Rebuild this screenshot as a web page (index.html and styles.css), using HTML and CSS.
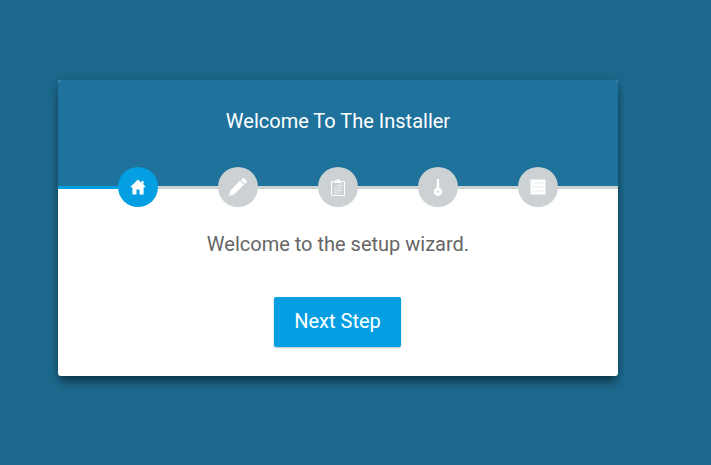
FILE: index.html
```html
<!DOCTYPE html>
<html lang="en">
<head>
<meta charset="UTF-8">
<meta name="viewport" content="width=device-width, initial-scale=1.0">
<title>Installer</title>
<link rel="stylesheet" href="styles.css">
</head>
<body>
<div class="wizard">
  <div class="wizard-header">
    <h2>Welcome To The Installer</h2>
  </div>
  <div class="steps">
    <div class="step active">
      <svg width="16" height="16" viewBox="0 0 16 16"><path fill="#fff" d="M8 .6 11.500 3.900V2h2v3.800L16 8.300H13.600V15.400H9.500V10.500H6.500V15.400H2.400V8.300H0z"/></svg>
    </div>
    <div class="step">
      <svg width="20" height="20" viewBox="0 0 20 20"><path fill="#fff" d="M14.800 1.300c.5-.4 1.100-.4 1.500 0l2.400 2.400c.4.400.4 1 0 1.500l-1.700 1.700-3.900-3.900zM12.100 3.500l4 4-9.800 9.800-5.300 1.700 1.500-5.500z"/></svg>
    </div>
    <div class="step">
      <svg width="20" height="20" viewBox="0 0 20 20"><path fill="none" stroke="#fff" stroke-width="1" d="M6.500 4.500H3.500v14h13v-14h-3"/><path fill="#fff" d="M6.500 3.500h2.300L9.200 2h1.600l.4 1.500h2.300v2.500h-7z"/><path fill="#eef0f1" d="M9 8h5v1H9zM6 10.500h8v1H6zM6 13h8v1H6zM6 15.500h5v1H6z"/></svg>
    </div>
    <div class="step">
      <svg width="20" height="20" viewBox="0 0 20 20"><path fill="#fff" d="M9 2h2l.4 8.800a4.200 4.200 0 1 1-2.800 0z"/><circle cx="10" cy="14.700" r="1" fill="#ccd1d4"/></svg>
    </div>
    <div class="step">
      <svg width="16" height="16" viewBox="0 0 16 16"><path fill="#fff" d="M.5.500h15v15H.5z"/><path fill="#e6e8ea" d="M2.500 3.500h1.500v1H2.500zM5 3.500h8.500v1H5zM2.500 7.500h1.500v1H2.500zM5 7.500h8.500v1H5zM2.500 11.500h1.500v1H2.500zM5 11.500h8.500v1H5z"/></svg>
    </div>
  </div>
  <div class="wizard-body">
    <p>Welcome to the setup wizard.</p>
    <button class="next-btn">Next Step</button>
  </div>
</div>
</body>
</html>
```

FILE: styles.css
```css
body {
  font-family: Roboto, Arial, sans-serif;
  background-color: #1c688c;
  margin: 0;
  padding: 80px 0 0 58px;
  min-height: 100vh;
  box-sizing: border-box;
}

.wizard {
  width: 560px;
  background-color: #fff;
  border-radius: 3px;
  box-shadow: 0 0 9px rgba(0, 0, 0, 0.16), 0 8px 10px -2px rgba(0, 0, 0, 0.45);
}

.wizard-header {
  height: 106px;
  background-color: #1f729b;
  border-radius: 3px 3px 0 0;
}

.wizard-header h2 {
  margin: 0;
  padding-top: 29px;
  font-size: 20px;
  font-weight: 400;
  line-height: 24px;
  text-align: center;
  color: #fff;
}

.steps {
  height: 3px;
  padding-left: 60px;
  display: flex;
  align-items: center;
  gap: 60px;
  background: linear-gradient(to right, #049fe3 60px, #ccd1d4 60px);
}

.step {
  width: 40px;
  height: 40px;
  flex: none;
  margin-bottom: 2px;
  border-radius: 50%;
  background-color: #ccd1d4;
  display: flex;
  justify-content: center;
  align-items: center;
}

.step.active {
  background-color: #049fe3;
}

.wizard-body {
  height: 187px;
  text-align: center;
}

.wizard-body p {
  margin: 0;
  padding-top: 43px;
  font-size: 20px;
  line-height: 24px;
  color: #666;
}

.next-btn {
  display: block;
  margin: 41px 0 0 216px;
  width: 127px;
  height: 50px;
  padding: 0 0 2px;
  font-family: inherit;
  font-size: 20px;
  color: #fff;
  background-color: #049fe3;
  border: none;
  border-radius: 2px;
  box-shadow: 0 1px 2px rgba(0, 0, 0, 0.25);
}
```
